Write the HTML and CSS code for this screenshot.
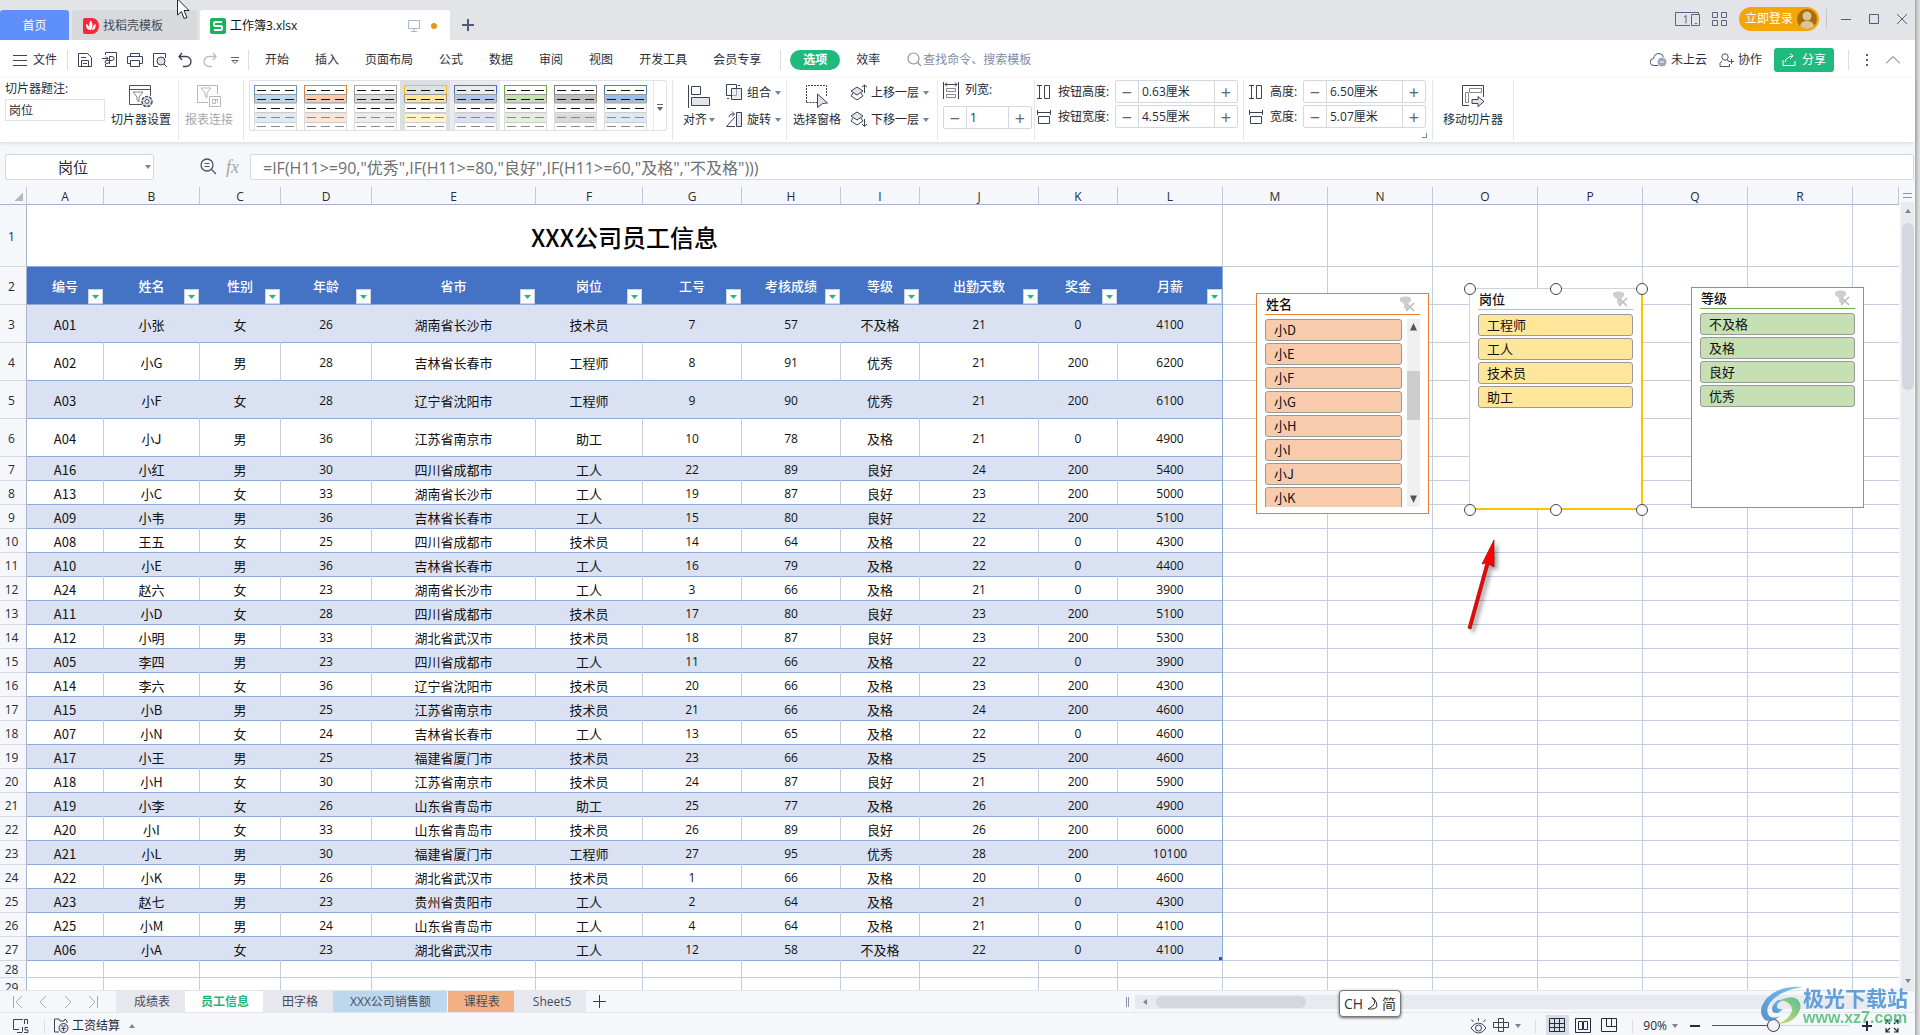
FILE: index.html
```html
<!DOCTYPE html>
<html lang="zh-CN">
<head>
<meta charset="utf-8">
<title>工作簿3.xlsx</title>
<link rel="stylesheet" href="styles.css">
</head>
<body>
<svg class="defs" aria-hidden="true">
  <symbol id="preset" viewBox="0 0 43 45">
    <rect x="0.5" y="0.5" width="42" height="9" fill="var(--head)" stroke="var(--accent)"/>
    <rect x="0.5" y="9.5" width="42" height="8" fill="var(--fill)" stroke="#999"/>
    <path d="M0 18.5h43M0 27.5h43M0 37.5h43" stroke="#ccc" stroke-width="2"/>
    <path d="M0.5 18v27M42.5 18v27" stroke="#ddd"/>
    <rect x="1" y="19" width="41" height="8" fill="#fff"/>
    <rect x="1" y="29" width="41" height="8" fill="var(--soft)"/>
    <rect x="1" y="38" width="41" height="7" fill="#fff"/>
    <path d="M3 5.5h9m5 0h9m5 0h9M3 14.5h9m5 0h9m5 0h9M3 23.5h9m5 0h9m5 0h9" stroke="#111"/>
    <path d="M3 32.5h9m5 0h9m5 0h9M3 41.5h9m5 0h9m5 0h9" stroke="#888"/>
  </symbol>
  <symbol id="caret" viewBox="0 0 6 4"><path d="M0 0h6L3 4z" fill="#7a8398"/></symbol>
  <symbol id="nofilter" viewBox="0 0 16 16">
    <path d="M1 2c3-2 8-2 11 0v3L9 8v7l-4-3V8L1 5z" fill="#cfcfcf"/><path d="M8 8l7 7M15 7l-8 8" stroke="#bbb" stroke-width="1.5"/>
  </symbol>
  <symbol id="filter" viewBox="0 0 15 15"><path d="M4 6h7l-3.500 4z" fill="#1fb980"/></symbol>
</svg>

<div class="app">
  <header class="titlebar">
    <nav class="doctabs">
      <button class="doctab home">首页</button>
      <button class="doctab store">
        <svg width="16" height="16" viewBox="0 0 16 16"><path d="M2 0h7a7 8 0 0 1 0 16H2a2 2 0 0 1-2-2V2a2 2 0 0 1 2-2z" fill="#f5273d"/><path d="M7.500 2.500c3 3 2 6 .5 10-2-2-2.500-6-.5-10zM3 6c2 .5 3 2 4 6-3 0-4-3-4-6zM12.500 6c-2 1-3 2.500-3.500 6 3 0 4-3 3.500-6z" fill="#fff"/></svg>
        找稻壳模板</button>
      <button class="doctab book">
        <svg width="16" height="16" viewBox="0 0 16 16"><rect width="16" height="16" rx="2" fill="#18b45c"/><path d="M12 4H5.500Q4 4 4 5.500V6.500Q4 8 5.500 8h5q1.500 0 1.500 1.500v1Q12 12 10.500 12H4" fill="none" stroke="#fff" stroke-width="2"/></svg>
        <span class="grow">工作簿3.xlsx</span>
        <svg width="12" height="12" viewBox="0 0 12 12" fill="none" stroke="#a9b3cc"><path d="M.5.5h11v8H.5zM6 8.500v3M3 11.500h6"/></svg>
        <i class="unsaved"></i></button>
      <button class="icon add"><svg width="12" height="12" viewBox="0 0 12 12"><path d="M6 0v12M0 6h12" stroke="#4f5c78" stroke-width="2"/></svg></button>
    </nav>
    <div class="winbar">
      <button class="icon"><svg width="25" height="15" viewBox="0 0 25 15" fill="none" stroke="#5a6580"><path d="M15 13.500H.5V.5h23v2M16.500 2.500h8v11h-8zM20 11.500h2M9 5l2-1.500v8"/></svg></button>
      <button class="icon"><svg width="15" height="15" viewBox="0 0 15 15" fill="none" stroke="#5a6580"><path d="M.5.500h5v5h-5zM9.500.500h5v5h-5zM.5 8.500h5v5h-5zM9.500 8.500h5v5h-5z"/></svg></button>
      <button class="login">立即登录
        <svg width="20" height="20" viewBox="0 0 20 20"><circle cx="10" cy="10" r="10" fill="#a66d06"/><circle cx="10" cy="7" r="4.500" fill="#dcc39a"/><path d="M3 17q1-5 7-5t7 5q-3 3-7 3t-7-3z" fill="#dcc39a"/></svg></button>
      <i class="sep"></i>
      <button class="icon"><svg width="10" height="10" viewBox="0 0 10 10"><path d="M0 5.500h10" stroke="#4f5c78"/></svg></button>
      <button class="icon"><svg width="10" height="10" viewBox="0 0 10 10"><path d="M.5.500h9v9h-9z" fill="none" stroke="#4f5c78"/></svg></button>
      <button class="icon"><svg width="10" height="10" viewBox="0 0 10 10"><path d="M0 0l10 10M10 0L0 10" stroke="#4f5c78"/></svg></button>
    </div>
  </header>

  <div class="menubar">
    <button class="file"><svg width="14" height="12" viewBox="0 0 14 12"><path d="M0 1.500h14M0 6.500h14M0 11.500h14" stroke="#444"/></svg>文件</button>
    <i class="sep"></i>
    <div class="quick">
      <button class="icon"><svg width="16" height="16" viewBox="0 0 16 16" fill="none" stroke="#3a4256"><path d="M1.500 1.500h9l4 4v9h-13zM4.500 14V8.500h7V14M4 5.500h5M6 11.500h4"/></svg></button>
      <button class="icon"><svg width="16" height="16" viewBox="0 0 16 16" fill="none" stroke="#3a4256"><path d="M3.500 3V.5h11v14h-11V12M0 6.500h6M4 4.500l2 2-2 2M7.500 12V4.500H10q2 0 2 2t-2 2H5q-2 0-2 1.500t2 1.500 2.500-2"/></svg></button>
      <button class="icon"><svg width="16" height="16" viewBox="0 0 16 16" fill="none" stroke="#3a4256"><path d="M3.500 4V1.500h9V4M3 11.500H.5v-7h15v7H13M3.500 8.500h9v6h-9z"/></svg></button>
      <button class="icon"><svg width="16" height="16" viewBox="0 0 16 16" fill="none" stroke="#3a4256"><path d="M6 14.500H1.500v-13h12V6"/><circle cx="9" cy="9" r="4" fill="#dfe2e8"/><path d="M12 12l3 3"/></svg></button>
      <button class="icon"><svg width="16" height="16" viewBox="0 0 16 16" fill="none" stroke="#3a4256" stroke-width="1.300"><path d="M5 1L2 4.500 5 8M2 4.500h7a5 5 0 0 1 0 10H6"/></svg></button>
      <button class="icon"><svg width="16" height="16" viewBox="0 0 16 16" fill="none" stroke="#b8bcc6" stroke-width="1.300"><path d="M11 1l3 3.500L11 8M14 4.500H7a5 5 0 0 0 0 10h3"/></svg></button>
      <button class="icon"><svg width="16" height="16" viewBox="0 0 16 16" fill="none" stroke="#5a6378"><path d="M4 5.500h8M5 8.500h6L8 11.500z"/></svg></button>
    </div>
    <i class="sep"></i>
    <nav class="menus">
      <button>开始</button><button>插入</button><button>页面布局</button><button>公式</button><button>数据</button><button>审阅</button><button>视图</button><button>开发工具</button><button>会员专享</button>
    </nav>
    <i class="sep"></i>
    <button class="pill">选项</button>
    <button class="effic">效率</button>
    <label class="search"><svg width="15" height="15" viewBox="0 0 15 15" fill="none" stroke="#8b94ad" stroke-width="1.200"><circle cx="6.500" cy="6.500" r="5.500"/><path d="M10.500 10.500L14 14"/></svg><input type="text" placeholder="查找命令、搜索模板" aria-label="查找命令"></label>
    <div class="account">
      <button class="cloud"><svg width="17" height="15" viewBox="0 0 17 15"><path d="M8 13.500H4a3.500 3.500 0 0 1-.5-7Q4.500 1.500 9 1.500q3.500 0 4.500 3.500" fill="none" stroke="#4a5369"/><circle cx="12" cy="10" r="4.500" fill="#a0a8bc"/><path d="M10 10h4" stroke="#fff"/></svg>未上云</button>
      <button class="team"><svg width="15" height="14" viewBox="0 0 15 14" fill="none" stroke="#4a5369"><circle cx="6" cy="4" r="3.200"/><path d="M8 7q2 1 2 1M3 8q-3 2-2 5.500h9.500V11M9.500 8.500H15M12.500 6v5"/></svg>协作</button>
      <button class="share"><svg width="14" height="13" viewBox="0 0 14 13" fill="none" stroke="#fff"><path d="M1 7v5.500h12V8M3 9q1-5 8-6M8 .5L11 3 8 6"/></svg>分享</button>
      <i class="sep"></i>
      <button class="icon"><svg width="4" height="14" viewBox="0 0 4 14" fill="#5a6378"><path d="M1 1h2v2H1zM1 6h2v2H1zM1 11h2v2H1z"/></svg></button>
      <button class="icon"><svg width="14" height="8" viewBox="0 0 14 8"><path d="M0 7.500L7 .5l7 7" fill="none" stroke="#5a6378"/></svg></button>
    </div>
  </div>

  <div class="ribbon">
    <section class="group caption">
      <div class="field"><label for="cap">切片器题注:</label><input id="cap" type="text" value="岗位"></div>
      <button class="big"><svg width="25" height="23" viewBox="0 0 25 23" fill="none" stroke="#4a5064"><path d="M13 19.500H.5V.5h21V11M.5 4.500h21"/><path d="M4 7h10l-4 5v5l-2-2v-3z" stroke="#888"/><circle cx="18" cy="16.500" r="5" fill="#dfe1e8" stroke-width="1.500" stroke-dasharray="3.200 1"/><circle cx="18" cy="16.500" r="2" fill="#fff"/></svg>切片器设置</button>
    </section>
    <section class="group link">
      <button class="big off"><svg width="25" height="23" viewBox="0 0 25 23" fill="none" stroke="#b5b7be"><path d="M11 17.500H.5V.5h20V9M4 3h10l-4 5v5l-2-2V8z"/><path d="M12.500 11.500h11v10h-11zM15.500 14.500h5v3M15.500 14.500v4h3v-4" fill="#fff"/></svg>报表连接</button>
    </section>
    <section class="group presets">
      <div class="gallery">
        <button class="blue"><svg><use href="#preset"/></svg></button>
        <button class="orange"><svg><use href="#preset"/></svg></button>
        <button class="gray"><svg><use href="#preset"/></svg></button>
        <button class="gold current"><svg><use href="#preset"/></svg></button>
        <button class="indigo hover"><svg><use href="#preset"/></svg></button>
        <button class="green"><svg><use href="#preset"/></svg></button>
        <button class="dark"><svg><use href="#preset"/></svg></button>
        <button class="royal"><svg><use href="#preset"/></svg></button>
        <button class="more"><svg width="6" height="8" viewBox="0 0 6 8"><path d="M0 .5h6" stroke="#5a6378"/><path d="M0 3h6L3 7z" fill="#5a6378"/></svg></button>
      </div>
    </section>
    <section class="group arrange">
      <button class="big"><svg width="23" height="23" viewBox="0 0 23 23" fill="none" stroke="#3a4256"><path d="M.5 0v23M3.500 1.500h9v8h-9z"/><path d="M3.500 12.500h18v8h-18z" fill="#e3e5ea"/></svg><span>对齐 <svg class="caret"><use href="#caret"/></svg></span></button>
      <div class="stack">
        <button><svg width="17" height="17" viewBox="0 0 17 17" fill="none" stroke="#3a4256"><path d="M.5.500h10v11H.5z"/><path d="M5.500 4.500h10v11h-10z" fill="#e3e5ea" fill-opacity=".6"/><path d="M12 1.500h2M1 14.500h2"/></svg>组合 <svg class="caret"><use href="#caret"/></svg></button>
        <button><svg width="17" height="17" viewBox="0 0 17 17" fill="none" stroke="#3a4256"><path d="M9 15.500H.5L9 6M3 6q0-3 5-3M6 .5L8.500 3 6 5.500"/><path d="M10.500 1.500h5v14h-5z" fill="#e3e5ea"/></svg>旋转 <svg class="caret"><use href="#caret"/></svg></button>
      </div>
    </section>
    <section class="group order">
      <button class="big"><svg width="24" height="23" viewBox="0 0 24 23" fill="none" stroke="#3a4256"><path d="M1.500 17V.5h20V11M1.500 17.500H12" stroke-dasharray="2 1"/><path d="M12.500 9l10 9-5 .5-5 4z" fill="#e3e5ea"/></svg>选择窗格</button>
      <div class="stack">
        <button><svg width="17" height="17" viewBox="0 0 17 17" fill="none" stroke="#3a4256"><path d="M3 9l-2 3 6 4 6-4-2-3"/><path d="M1 7l6-4 6 4-6 4z" fill="#e3e5ea"/><path d="M14.500 9V1M12 3l2.500-2L17 3"/></svg>上移一层 <svg class="caret"><use href="#caret"/></svg></button>
        <button><svg width="17" height="17" viewBox="0 0 17 17" fill="none" stroke="#3a4256"><path d="M3 7l-2 3 6 4 6-4-2-3"/><path d="M1 5l6-4 6 4-6 4z" fill="#e3e5ea"/><path d="M14.500 8v7M12 13l2.500 2.500L17 13"/></svg>下移一层 <svg class="caret"><use href="#caret"/></svg></button>
      </div>
    </section>
    <section class="group cols">
      <label for="cw"><svg width="16" height="17" viewBox="0 0 16 17" fill="none" stroke="#3a4256"><path d="M.5 0v17M15.500 0v17M2 2.500h12M4 .5l-2 2 2 2M12 .5l2 2-2 2"/><path d="M3.500 6.500h9v3h-9zM3.500 12.500h9v3h-9z" stroke="#888"/></svg>列宽:</label>
      <div class="spin"><button>−</button><input id="cw" value="1"><button>+</button></div>
    </section>
    <section class="group size">
      <label for="bh"><svg width="14" height="14" viewBox="0 0 14 14" fill="none" stroke="#3a4256"><path d="M0 .5h5M0 13.500h5M2.500.5v13M7.500.500h5v13h-5z"/></svg>按钮高度:</label>
      <div class="spin"><button>−</button><input id="bh" value="0.63厘米"><button>+</button></div>
      <label for="bw"><svg width="14" height="14" viewBox="0 0 14 14" fill="none" stroke="#3a4256"><path d="M.5 0v5M13.500 0v5M.5 2.500h13M1.500 6.500h11v7h-11z"/></svg>按钮宽度:</label>
      <div class="spin"><button>−</button><input id="bw" value="4.55厘米"><button>+</button></div>
    </section>
    <section class="group size">
      <label for="sh"><svg width="14" height="14" viewBox="0 0 14 14" fill="none" stroke="#3a4256"><path d="M0 .5h5M0 13.500h5M2.500.5v13M7.500.500h5v13h-5z"/></svg>高度:</label>
      <div class="spin"><button>−</button><input id="sh" value="6.50厘米"><button>+</button></div>
      <label for="sw"><svg width="14" height="14" viewBox="0 0 14 14" fill="none" stroke="#3a4256"><path d="M.5 0v5M13.500 0v5M.5 2.500h13M1.500 6.500h11v7h-11z"/></svg>宽度:</label>
      <div class="spin"><button>−</button><input id="sw" value="5.07厘米"><button>+</button></div>
      <i class="launcher"></i>
    </section>
    <section class="group move">
      <button class="big"><svg width="23" height="23" viewBox="0 0 23 23" fill="none" stroke="#3a4256"><path d="M7 20.500H.5V.5h21V12"/><path d="M7.500 3.500h12v4h-12zM3.500 7.500h3v10h-3z" stroke="#888"/><path d="M10 14.500h6v-3l6 5-6 5v-3h-6z" fill="#e3e5ea"/></svg>移动切片器</button>
    </section>
  </div>

  <div class="formula">
    <div class="namebox"><input type="text" value="岗位" aria-label="名称框"><svg class="caret"><use href="#caret"/></svg></div>
    <svg width="17" height="17" viewBox="0 0 17 17" fill="none" stroke="#4a5369" stroke-width="1.300"><circle cx="7" cy="7" r="6"/><path d="M4.500 5.500h5M4.500 8.500h5" stroke-width="1"/><path d="M11.500 11.500L16 16"/></svg>
    <span class="fx">fx</span>
    <input class="fbox" type="text" aria-label="编辑栏" value='=IF(H11&gt;=90,"优秀",IF(H11&gt;=80,"良好",IF(H11&gt;=60,"及格","不及格")))'>
  </div>

  <main class="work">
    <div class="sheet">
      <table>
        <colgroup><col class="rh"><col class="wa"><col class="wb"><col class="wc"><col class="wd"><col class="we"><col class="wf"><col class="wg"><col class="wg"><col class="wi"><col class="wj"><col class="wi"><col class="wl"><col class="wl"><col class="wl"><col class="wl"><col class="wl"><col class="wl"><col class="wl"><col></colgroup>
        <thead><tr><th class="corner"></th><th>A</th><th>B</th><th>C</th><th>D</th><th>E</th><th>F</th><th>G</th><th>H</th><th>I</th><th>J</th><th>K</th><th>L</th><th>M</th><th>N</th><th>O</th><th>P</th><th>Q</th><th>R</th><th></th></tr></thead>
        <tbody>
          <tr class="title"><th>1</th><td colspan="12">XXX公司员工信息</td><td class="free" colspan="7"></td></tr>
          <tr class="heads tall"><th>2</th><td>编号<button><svg><use href="#filter"/></svg></button></td><td>姓名<button><svg><use href="#filter"/></svg></button></td><td>性别<button><svg><use href="#filter"/></svg></button></td><td>年龄<button><svg><use href="#filter"/></svg></button></td><td>省市<button><svg><use href="#filter"/></svg></button></td><td>岗位<button><svg><use href="#filter"/></svg></button></td><td>工号<button><svg><use href="#filter"/></svg></button></td><td>考核成绩<button><svg><use href="#filter"/></svg></button></td><td>等级<button><svg><use href="#filter"/></svg></button></td><td>出勤天数<button><svg><use href="#filter"/></svg></button></td><td>奖金<button><svg><use href="#filter"/></svg></button></td><td>月薪<button><svg><use href="#filter"/></svg></button></td><td class="free" colspan="7"></td></tr>
          <tr class="band tall"><th>3</th><td>A01</td><td>小张</td><td>女</td><td>26</td><td>湖南省长沙市</td><td>技术员</td><td>7</td><td>57</td><td>不及格</td><td>21</td><td>0</td><td>4100</td><td class="free" colspan="7"></td></tr>
          <tr class="tall"><th>4</th><td>A02</td><td>小G</td><td>男</td><td>28</td><td>吉林省长春市</td><td>工程师</td><td>8</td><td>91</td><td>优秀</td><td>21</td><td>200</td><td>6200</td><td class="free" colspan="7"></td></tr>
          <tr class="band tall"><th>5</th><td>A03</td><td>小F</td><td>女</td><td>28</td><td>辽宁省沈阳市</td><td>工程师</td><td>9</td><td>90</td><td>优秀</td><td>21</td><td>200</td><td>6100</td><td class="free" colspan="7"></td></tr>
          <tr class="tall"><th>6</th><td>A04</td><td>小J</td><td>男</td><td>36</td><td>江苏省南京市</td><td>助工</td><td>10</td><td>78</td><td>及格</td><td>21</td><td>0</td><td>4900</td><td class="free" colspan="7"></td></tr>
          <tr class="band"><th>7</th><td>A16</td><td>小红</td><td>男</td><td>30</td><td>四川省成都市</td><td>工人</td><td>22</td><td>89</td><td>良好</td><td>24</td><td>200</td><td>5400</td><td class="free" colspan="7"></td></tr>
          <tr><th>8</th><td>A13</td><td>小C</td><td>女</td><td>33</td><td>湖南省长沙市</td><td>工人</td><td>19</td><td>87</td><td>良好</td><td>23</td><td>200</td><td>5000</td><td class="free" colspan="7"></td></tr>
          <tr class="band"><th>9</th><td>A09</td><td>小韦</td><td>男</td><td>36</td><td>吉林省长春市</td><td>工人</td><td>15</td><td>80</td><td>良好</td><td>22</td><td>200</td><td>5100</td><td class="free" colspan="7"></td></tr>
          <tr><th>10</th><td>A08</td><td>王五</td><td>女</td><td>25</td><td>四川省成都市</td><td>技术员</td><td>14</td><td>64</td><td>及格</td><td>22</td><td>0</td><td>4300</td><td class="free" colspan="7"></td></tr>
          <tr class="band"><th>11</th><td>A10</td><td>小E</td><td>男</td><td>36</td><td>吉林省长春市</td><td>工人</td><td>16</td><td>79</td><td>及格</td><td>22</td><td>0</td><td>4400</td><td class="free" colspan="7"></td></tr>
          <tr><th>12</th><td>A24</td><td>赵六</td><td>女</td><td>23</td><td>湖南省长沙市</td><td>工人</td><td>3</td><td>66</td><td>及格</td><td>21</td><td>0</td><td>3900</td><td class="free" colspan="7"></td></tr>
          <tr class="band"><th>13</th><td>A11</td><td>小D</td><td>女</td><td>28</td><td>四川省成都市</td><td>技术员</td><td>17</td><td>80</td><td>良好</td><td>23</td><td>200</td><td>5100</td><td class="free" colspan="7"></td></tr>
          <tr><th>14</th><td>A12</td><td>小明</td><td>男</td><td>33</td><td>湖北省武汉市</td><td>技术员</td><td>18</td><td>87</td><td>良好</td><td>23</td><td>200</td><td>5300</td><td class="free" colspan="7"></td></tr>
          <tr class="band"><th>15</th><td>A05</td><td>李四</td><td>男</td><td>23</td><td>四川省成都市</td><td>工人</td><td>11</td><td>66</td><td>及格</td><td>22</td><td>0</td><td>3900</td><td class="free" colspan="7"></td></tr>
          <tr><th>16</th><td>A14</td><td>李六</td><td>女</td><td>36</td><td>辽宁省沈阳市</td><td>技术员</td><td>20</td><td>66</td><td>及格</td><td>23</td><td>200</td><td>4300</td><td class="free" colspan="7"></td></tr>
          <tr class="band"><th>17</th><td>A15</td><td>小B</td><td>男</td><td>25</td><td>江苏省南京市</td><td>技术员</td><td>21</td><td>66</td><td>及格</td><td>24</td><td>200</td><td>4600</td><td class="free" colspan="7"></td></tr>
          <tr><th>18</th><td>A07</td><td>小N</td><td>女</td><td>24</td><td>吉林省长春市</td><td>工人</td><td>13</td><td>65</td><td>及格</td><td>22</td><td>0</td><td>4600</td><td class="free" colspan="7"></td></tr>
          <tr class="band"><th>19</th><td>A17</td><td>小王</td><td>男</td><td>25</td><td>福建省厦门市</td><td>技术员</td><td>23</td><td>66</td><td>及格</td><td>25</td><td>200</td><td>4600</td><td class="free" colspan="7"></td></tr>
          <tr><th>20</th><td>A18</td><td>小H</td><td>女</td><td>30</td><td>江苏省南京市</td><td>技术员</td><td>24</td><td>87</td><td>良好</td><td>21</td><td>200</td><td>5900</td><td class="free" colspan="7"></td></tr>
          <tr class="band"><th>21</th><td>A19</td><td>小李</td><td>女</td><td>26</td><td>山东省青岛市</td><td>助工</td><td>25</td><td>77</td><td>及格</td><td>26</td><td>200</td><td>4900</td><td class="free" colspan="7"></td></tr>
          <tr><th>22</th><td>A20</td><td>小I</td><td>女</td><td>33</td><td>山东省青岛市</td><td>技术员</td><td>26</td><td>89</td><td>良好</td><td>26</td><td>200</td><td>6000</td><td class="free" colspan="7"></td></tr>
          <tr class="band"><th>23</th><td>A21</td><td>小L</td><td>男</td><td>30</td><td>福建省厦门市</td><td>工程师</td><td>27</td><td>95</td><td>优秀</td><td>28</td><td>200</td><td>10100</td><td class="free" colspan="7"></td></tr>
          <tr><th>24</th><td>A22</td><td>小K</td><td>男</td><td>26</td><td>湖北省武汉市</td><td>技术员</td><td>1</td><td>66</td><td>及格</td><td>20</td><td>0</td><td>4600</td><td class="free" colspan="7"></td></tr>
          <tr class="band"><th>25</th><td>A23</td><td>赵七</td><td>男</td><td>23</td><td>贵州省贵阳市</td><td>工人</td><td>2</td><td>64</td><td>及格</td><td>21</td><td>0</td><td>4300</td><td class="free" colspan="7"></td></tr>
          <tr><th>26</th><td>A25</td><td>小M</td><td>男</td><td>24</td><td>山东省青岛市</td><td>工人</td><td>4</td><td>64</td><td>及格</td><td>21</td><td>0</td><td>4100</td><td class="free" colspan="7"></td></tr>
          <tr class="band"><th>27</th><td>A06</td><td>小A</td><td>女</td><td>23</td><td>湖北省武汉市</td><td>工人</td><td>12</td><td>58</td><td>不及格</td><td>22</td><td>0</td><td class="last">4100</td><td class="free" colspan="7"></td></tr>
          <tr class="blank"><th>28</th><td></td><td></td><td></td><td></td><td></td><td></td><td></td><td></td><td></td><td></td><td></td><td></td><td class="free" colspan="7"></td></tr>
          <tr class="blank"><th>29</th><td></td><td></td><td></td><td></td><td></td><td></td><td></td><td></td><td></td><td></td><td></td><td></td><td class="free" colspan="7"></td></tr>
        </tbody>
      </table>

      <aside class="slicer names">
        <h2>姓名<svg><use href="#nofilter"/></svg></h2>
        <div class="scroller">
          <div class="items"><button>小D</button><button>小E</button><button>小F</button><button>小G</button><button>小H</button><button>小I</button><button>小J</button><button>小K</button></div>
          <div class="track"><svg width="9" height="8" viewBox="0 0 9 8"><path d="M1 7.500h7L4.500 0z" fill="#555"/></svg><i></i><svg width="9" height="8" viewBox="0 0 9 8"><path d="M1 .5h7L4.500 8z" fill="#555"/></svg></div>
        </div>
      </aside>
      <aside class="slicer posts">
        <h2>岗位<svg><use href="#nofilter"/></svg></h2>
        <div class="items"><button>工程师</button><button>工人</button><button>技术员</button><button>助工</button></div>
        <i class="handle tl"></i><i class="handle tc"></i><i class="handle tr"></i><i class="handle bl"></i><i class="handle bc"></i><i class="handle br"></i>
      </aside>
      <aside class="slicer grades">
        <h2>等级<svg><use href="#nofilter"/></svg></h2>
        <div class="items"><button>不及格</button><button>及格</button><button>良好</button><button>优秀</button></div>
      </aside>
      <svg class="pointer" width="40" height="100" viewBox="0 0 40 100"><path d="M30 1l0 27-5-3L7 90 4 89 22 24l-4 1z" fill="#f00" stroke="#8a1010" stroke-width=".7"/></svg>
    </div>
    <div class="vscroll"><i class="split"></i><div class="vtrack"><svg class="caret up"><use href="#caret"/></svg><i class="thumb"></i><svg class="caret"><use href="#caret"/></svg></div></div>
  </main>

  <div class="tabs">
    <div class="pager">
      <button class="icon"><svg width="10" height="12" viewBox="0 0 10 12" fill="none" stroke="#a7abb8"><path d="M.5 0v12M9 0L3 6l6 6"/></svg></button>
      <button class="icon"><svg width="10" height="12" viewBox="0 0 10 12" fill="none" stroke="#a7abb8"><path d="M8 0L2 6l6 6"/></svg></button>
      <button class="icon"><svg width="10" height="12" viewBox="0 0 10 12" fill="none" stroke="#a7abb8"><path d="M2 0l6 6-6 6"/></svg></button>
      <button class="icon"><svg width="10" height="12" viewBox="0 0 10 12" fill="none" stroke="#a7abb8"><path d="M1 0l6 6-6 6M9.500 0v12"/></svg></button>
    </div>
    <button class="tab">成绩表</button><button class="tab active">员工信息</button><button class="tab">田字格</button><button class="tab sales">XXX公司销售额</button><button class="tab course">课程表</button><button class="tab">Sheet5</button>
    <button class="icon newtab"><svg width="13" height="13" viewBox="0 0 13 13"><path d="M6.500 0v13M0 6.500h13" stroke="#333b50"/></svg></button>
    <div class="hscroll"><i class="grip"></i><div class="htrack"><svg width="4" height="6" viewBox="0 0 4 6"><path d="M4 0v6L0 3z" fill="#7a86a8"/></svg><i class="thumb"></i></div></div>
  </div>

  <footer class="status">
    <button class="icon"><svg width="17" height="16" viewBox="0 0 17 16" fill="none" stroke="#3a4256"><path d="M10 1.500H.5v10H6M4 14.500h4M11.500 6V1.500h3V6M9.500 9v4.500q0 1.500-2 1M15 9.500h-3v2.500h3v2.500h-4"/></svg></button>
    <i class="sep"></i>
    <button class="calc"><svg width="15" height="15" viewBox="0 0 15 15" fill="none" stroke="#3a4256"><path d="M5 14H.5V1H5l1 2h4l1-2 2 2v2"/><circle cx="9.500" cy="10" r="4.500" fill="#dfe2e8"/><path d="M7.500 7l2 2.500 2-2.500M9.500 9.500V13M7.500 10.500h4"/></svg>工资结算<svg class="caret up"><use href="#caret"/></svg></button>
    <div class="views">
      <button class="icon"><svg width="17" height="16" viewBox="0 0 17 16" fill="none" stroke="#3a4256"><path d="M1 10q3-5 7.500-5t7.500 5q-3 5-7.500 5T1 10zM8.500 3V0M3.500 4l-2-2.500M13.500 4l2-2.500"/><circle cx="8.500" cy="10" r="3"/></svg></button>
      <button class="icon focus"><svg width="17" height="15" viewBox="0 0 17 15" fill="none" stroke="#3a4256"><path d="M5.500.5h5v4h5v5h-5v4h-5v-4h-5v-5h5zM5.500 4.500h5v5h-5z"/></svg><svg class="caret"><use href="#caret"/></svg></button>
      <i class="sep"></i>
      <button class="icon on"><svg width="17" height="15" viewBox="0 0 17 15" fill="none" stroke="#232b40"><path d="M.5.500h15v13H.5zM.5 5.500h15M.5 9.500h15M5.500.5v13M10.500.5v13"/></svg></button>
      <button class="icon"><svg width="17" height="15" viewBox="0 0 17 15" fill="none" stroke="#232b40"><path d="M.5.500h15v14H.5zM3.500 3.500h4v8h-4zM8.500 3.500h4v8h-4z"/></svg></button>
      <button class="icon"><svg width="17" height="15" viewBox="0 0 17 15" fill="none" stroke="#232b40"><path d="M.5.500h15v13H.5zM5.500.5v8h10M10.500.5v8"/></svg></button>
      <i class="sep"></i>
      <button class="zoom">90%<svg class="caret"><use href="#caret"/></svg></button>
      <button class="icon"><svg width="10" height="10" viewBox="0 0 10 10"><path d="M0 5h10" stroke="#232b40" stroke-width="2"/></svg></button>
      <input class="slider" type="range" min="0" max="100" value="44" aria-label="缩放">
      <button class="icon"><svg width="10" height="10" viewBox="0 0 10 10"><path d="M0 5h10M5 0v10" stroke="#232b40" stroke-width="2"/></svg></button>
      <button class="icon full"><svg width="14" height="14" viewBox="0 0 14 14" fill="none" stroke="#232b40" stroke-width="1.200"><path d="M1 5V1h4M1 1l4 4M9 1h4v4M13 1L9 5M1 9v4h4M1 13l4-4M13 9v4H9M13 13L9 9"/></svg></button>
    </div>
  </footer>
</div>
<div class="edge"></div>

<div class="ime">CH <svg width="11" height="13" viewBox="0 0 11 13" fill="none" stroke="#333"><path d="M5 .5q7 6-4 11.500 11 1 8.500-6Q8.500 2 5 .5z"/></svg> 简</div>
<div class="mark">
  <svg width="43" height="40" viewBox="0 0 43 40"><defs><linearGradient id="sw1" x1="0" y1="1" x2="1" y2="0"><stop offset="0" stop-color="#3c7fc6"/><stop offset="1" stop-color="#63bff2"/></linearGradient><linearGradient id="sw2" x1="0" y1="1" x2="1" y2="0"><stop offset="0" stop-color="#c8d94a"/><stop offset="1" stop-color="#3fb78b"/></linearGradient></defs><path d="M43 1Q20-1 7 12-4 25 5 34q7 3 15-4-9 4-12-2 -3-9 8-17Q27 3 43 1z" fill="url(#sw1)"/><path d="M18 14q-8 6-5 12 5 3 10-3-6 1-6-3t8-6z" fill="url(#sw1)"/><path d="M20 14q11-5 17-1 6 6 2 13-6 12-22 12 12-4 15-13 1-9-12-11z" fill="url(#sw2)"/></svg>
  <div><strong>极光下载站</strong><span>www.xz7.com</span></div>
</div>
<svg class="cursor" width="13" height="20" viewBox="0 0 13 20"><path d="M.5-1v16l4-3.500 2.500 7 3-1-3-7h5z" fill="#fff" stroke="#222"/></svg>
</body>
</html>
```
FILE: styles.css
```css
* { box-sizing: border-box; }
body {
  margin: 0; height: 100vh; display: flex; overflow: hidden; position: relative;
  font: 12px/16px "Open Sans", "Noto Sans CJK SC", sans-serif; color: #262b38; background: #f5f7fa;
}
button, input { font: inherit; color: inherit; margin: 0; padding: 0; border: 0; background: none; min-width: 0; }
button { display: flex; align-items: center; justify-content: center; white-space: nowrap; }
input:focus { outline: 0; }
svg { display: block; flex: none; }
.defs { position: absolute; width: 0; height: 0; }
.caret { width: 6px; height: 4px; }
.caret.up { transform: scaleY(-1); }
.sep { width: 1px; height: 20px; background: #dcdee4; flex: none; }
.app { flex: 1; min-width: 0; display: flex; flex-direction: column; }
.edge { width: 5px; background: linear-gradient(90deg, #a9a9ab, #dedede 80%); }

/* title bar */
.titlebar { height: 40px; background: #e3e4e8; display: flex; justify-content: space-between; }
.doctabs { display: flex; align-items: flex-end; gap: 3px; }
.doctab { height: 30px; border-radius: 3px 3px 0 0; padding-top: 1px; }
.home { width: 69px; background: #5f8ffb; color: #fff; }
.store { width: 125px; background: #d8d9dd; color: #444a58; justify-content: flex-start; gap: 4px; padding-left: 11px; }
.book { width: 250px; background: #fff; color: #111; gap: 4px; padding: 1px 13px 0 10px; }
.grow { flex: 1; text-align: left; }
.unsaved { width: 6px; height: 6px; border-radius: 3px; background: #e8960c; margin-left: 7px; }
.add { height: 30px; width: 30px; }
.winbar { display: flex; align-items: center; gap: 12px; padding: 0 8px 2px 0; }
.login { height: 24px; border-radius: 12px; background: #f5a50a; color: #fff; gap: 4px; padding: 0 2px 0 6px; }
.winbar .sep { margin: 0 2px 0 -5px; background: #c6c8ce; }
.winbar .sep ~ .icon { margin-right: 6px; }
.winbar .icon:last-child { margin: 0; }

/* menu bar */
.menubar { height: 38px; background: #fff; display: flex; align-items: center; color: #2b3040; padding-top: 1px; }
.file { gap: 6px; padding: 0 10px 0 13px; }
.quick { display: flex; gap: 9px; padding: 0 5px 0 9px; }
.menus { display: flex; gap: 26px; padding: 0 19px 0 16px; }
.pill { height: 20px; width: 50px; border-radius: 10px; background: #1fba7d; color: #fff; font-weight: 600; margin-left: 9px; }
.effic { margin: 0 27px 0 16px; }
.search { display: flex; align-items: center; gap: 1px; }
.search input { width: 140px; }
.search input::placeholder { color: #838ca5; opacity: 1; }
.account { margin-left: auto; display: flex; align-items: center; gap: 12px; padding-right: 15px; }
.account button { gap: 4px; }
.account .sep { margin: 0 4px 0 2px; }
.account .icon { margin-right: 5px; }
.account .icon:last-child { margin: 0; }
.account .share { height: 24px; width: 60px; border-radius: 3px; background: #1fba7d; color: #fff; gap: 6px; }

/* ribbon */
.ribbon { height: 64px; background: #fff; display: flex; box-shadow: 0 1px 4px #0002; position: relative; padding: 2px 0; }
.group { border-right: 1px solid #e4e6ec; height: 60px; display: flex; flex: none; position: relative; }
.caption { width: 179px; padding-left: 5px; gap: 6px; }
.field { width: 100px; }
.field label { display: block; line-height: 18px; }
.field input { width: 100%; height: 22px; border: 1px solid #dfe1e8; padding: 0 3px; display: block; margin-top: 1px; }
.big { flex-direction: column; gap: 4px; height: 51px; justify-content: flex-start; padding-top: 5px; }
.big span { display: flex; align-items: center; gap: 2px; }
.off { color: #a6a8ae; }
.link { width: 65px; padding-left: 6px; }
.presets { width: 429px; padding-left: 5px; }
.gallery { width: 418px; height: 51px; border: 1px solid #dfe1e8; border-radius: 2px; display: flex; }
.gallery button { width: 50px; height: 49px; }
.gallery button svg { width: 43px; height: 45px; margin-top: 4px; }
.gallery .more { width: 13px; margin-left: auto; border-left: 1px solid #e4e6ec; }
.gallery .more svg { width: 6px; height: 8px; }
.blue { --accent: #5b9bd5; --fill: #bdd7ee; --soft: #ddebf7; --head: #fff; }
.orange { --accent: #ed7d31; --fill: #f8cbad; --soft: #fce4d6; --head: #fff; }
.gray { --accent: #a5a5a5; --fill: #dbdbdb; --soft: #ededed; --head: #fff; }
.gold { --accent: #ffc000; --fill: #ffe699; --soft: #fff2cc; --head: #dde2e4; }
.indigo { --accent: #4472c4; --fill: #b4c6e7; --soft: #d9e1f2; --head: #e8ebf0; }
.green { --accent: #70ad47; --fill: #c6e0b4; --soft: #e2efda; --head: #fff; }
.dark { --accent: #808080; --fill: #bfbfbf; --soft: #d9d9d9; --head: #fff; }
.royal { --accent: #4f81bd; --fill: #9dbce6; --soft: #dce8f8; --head: #fff; }
.current { background: #dadfe2; }
.hover { background: #e8ebf0; }
.arrange { width: 114px; padding-left: 10px; gap: 11px; }
.stack { display: flex; flex-direction: column; gap: 10px; padding-top: 4px; }
.stack button { gap: 4px; height: 17px; }
.order { width: 151px; padding-left: 6px; gap: 9px; }
.cols { width: 97px; padding-left: 5px; flex-direction: column; gap: 6px; }
.cols label { display: flex; gap: 6px; align-items: center; height: 20px; }
.spin { display: flex; border: 1px solid #d5d8e0; border-radius: 2px; height: 23px; width: 123px; }
.cols .spin { width: 89px; }
.spin button { width: 22px; flex: none; font-size: 18px; color: #666; }
.spin input { flex: 1; border: solid #d5d8e0; border-width: 0 1px; padding-left: 3px; }
.size { display: grid; grid-template-columns: 78px 123px; grid-auto-rows: 23px; row-gap: 2px; padding: 0 5px 0 2px; width: 209px; justify-content: start; }
.size + .size { grid-template-columns: 54px 123px; width: 189px; padding-left: 5px; }
.size label { display: flex; align-items: center; gap: 7px; white-space: nowrap; }
.launcher { position: absolute; right: 5px; bottom: 2px; width: 5px; height: 5px; border: solid #7a8398; border-width: 0 1px 1px 0; }
.move { width: 81px; padding-left: 10px; }

/* formula bar */
.formula { height: 45px; display: flex; align-items: center; padding: 4px 1px 0 5px; font-size: 15px; }
.namebox { width: 149px; height: 26px; border: 1px solid #d5d8de; border-radius: 2px; background: #fff; display: flex; align-items: center; padding-right: 2px; margin-right: 46px; }
.namebox input { flex: 1; text-align: center; padding-right: 5px; }
.fx { font: italic 18px/20px "Liberation Serif", serif; color: #a3a7b0; margin: 0 8px 0 9px; width: 16px; }
.fbox { flex: 1; height: 26px; border: 1px solid #d5d8de; border-radius: 2px; background: #fff; color: #6e7074; padding-left: 12px; font-size: 16px; }

/* sheet */
.work { flex: 1; min-height: 0; display: flex; }
.sheet { flex: 1; min-width: 0; overflow: hidden; position: relative; background: #fff; }
table { width: 100%; table-layout: fixed; border-collapse: separate; border-spacing: 0; line-height: 14px; }
.rh { width: 27px; } .wa { width: 77px; } .wb { width: 96px; } .wc { width: 81px; } .wd { width: 91px; }
.we { width: 164px; } .wf { width: 107px; } .wg { width: 99px; } .wi { width: 79px; } .wj { width: 119px; } .wl { width: 105px; }
th { padding: 2px 0 0; font-weight: 400; background: #f5f7fa; border: solid #a9b3cd; border-width: 0 1px 1px 0; }
thead th { height: 18px; padding-top: 3px; border-right-color: #c3c9da; }
tbody th { border-bottom-color: #d3d8e4; padding-right: 3px; }
.corner { background: linear-gradient(135deg, transparent 50%, #b5b8c0 50%) 15px 6px / 8px 8px no-repeat #f5f7fa; }
tr { height: 24px; }
.tall { height: 38px; }
.title { height: 62px; }
.blank, thead tr { height: 17px; }
.blank:nth-child(29) { height: 18px; }
td { padding: 2px 0 0; text-align: center; border: solid #c5ccde; border-width: 0 1px 1px 0; border-bottom-color: #8ea9db; font-size: 12px; position: relative; color: #111; }
td:nth-child(2), td:nth-child(3), td:nth-child(4), td:nth-child(6), td:nth-child(7), td:nth-child(10) { font-size: 13px; font-family: "Noto Sans CJK SC", sans-serif; }
.title td:nth-child(2) { font-size: 24px; font-weight: 500; color: #000; }
.heads td { background: #4472c4; color: #fff; font-size: 13px; font-weight: 500; font-family: "Noto Sans CJK SC", sans-serif; border-right-color: #4472c4; padding-top: 0; }
.heads td button { position: absolute; right: 0; bottom: 0; width: 15px; height: 15px; background: #fff; border: 1px solid #ccd3e0; }
.heads td svg { width: 15px; height: 15px; }
.band td { background-color: #d9e1f2; border-right-color: #d9e1f2; }
td:nth-child(13) { border-right-color: #8ea9db; }
.blank td { border-color: #c5ccde; }
td.free { border-right: 0; border-bottom-color: #c5ccde; background: repeating-linear-gradient(90deg, #fff 0 104px, #c5ccde 104px 105px); }
.last::after { content: ""; position: absolute; right: 0; bottom: 0; width: 3px; height: 3px; background: #2f55a4; }

/* slicers */
.slicer { position: absolute; width: 173px; height: 221px; background: #fff; border: 1px solid; padding: 0 8px; font: 13px/16px "Noto Sans CJK SC", sans-serif; color: #111; }
.slicer h2 { margin: 0 0 4px; height: 21px; border-bottom: 1px solid; display: flex; align-items: center; justify-content: space-between; font-size: 13px; line-height: 16px; font-weight: 500; padding: 0 5px 0 1px; }
.slicer h2 svg { width: 16px; height: 16px; }
.items { display: flex; flex-direction: column; gap: 2px; flex: 1; }
.items button { height: 22px; flex: none; border: 1px solid #999; border-radius: 3px; justify-content: flex-start; padding-left: 8px; }
.names { left: 1256px; top: 106px; border-color: #ed7d31; }
.names h2 { border-color: #ed7d31; }
.names .items button { background: #f8cbad; }
.posts { left: 1469px; top: 101px; height: 222px; width: 174px; border: solid #d0d3da; border-width: 1px 2px 2px 1px; border-right-color: #ffc000; border-bottom-color: #ffc000; }
.posts h2 { border-color: #ffc000; }
.posts .items button { background: #ffe699; }
.grades { left: 1691px; top: 100px; border-color: #70ad47; }
.grades h2 { border-color: #70ad47; }
.grades .items button { background: #c6e0b4; }
.scroller { display: flex; gap: 5px; height: 188px; overflow: hidden; }
.track { width: 13px; background: #f0f0f0; display: flex; flex-direction: column; align-items: center; padding: 4px 0; }
.track i { width: 13px; height: 49px; background: #cdcdcd; margin: 40px 0 auto; }
.handle { position: absolute; width: 12px; height: 12px; border-radius: 6px; border: 1px solid #444; background: #fff; }
.tl, .tc, .tr { top: -6px; } .bl, .bc, .br { bottom: -8px; }
.tl, .bl { left: -6px; } .tc, .bc { left: 80px; } .tr, .br { right: -7px; }
.pointer { position: absolute; left: 1464px; top: 352px; filter: drop-shadow(3px 3px 2px #0006); }

/* scroll bars */
.vscroll { width: 16px; display: flex; flex-direction: column; padding-right: 1px; }
.split { height: 5px; margin: 6px 2px 4px 4px; border: solid #8d95ab; border-width: 1px 0; }
.vtrack { flex: 1; background: #e9eaef; margin-left: 2px; display: flex; flex-direction: column; align-items: center; padding: 7px 0; }
.vtrack .thumb { width: 12px; height: 167px; border-radius: 6px; background: #d4d7df; margin: 10px 0 auto; }

/* sheet tabs */
.tabs { height: 23px; border: solid #e3e5ea; border-width: 1px 0; display: flex; align-items: stretch; color: #464c5e; }
.pager { width: 116px; display: flex; align-items: center; gap: 15px; padding-left: 13px; }
.tab { background: #e6e8ed; padding: 0 14px 0 18px; border-right: 1px solid #e6e8ed; }
.tab.active { background: #fff; color: #1fb57a; font-weight: 700; padding: 0 14px 0 16px; }
.tab.sales { background: #bdd7ee; padding: 0 16px 0 17px; border-right-color: #f5f7fa; }
.tab.course { background: #f4b084; padding: 0 14px 0 16px; }
.newtab { padding: 0 7px; }
.hscroll { flex: 1; max-width: 790px; margin-left: auto; display: flex; align-items: center; gap: 6px; }
.grip { width: 3px; height: 10px; border: solid #8d95ab; border-width: 0 1px; margin-left: 1px; }
.htrack { flex: 1; height: 14px; background: #e9eaef; display: flex; align-items: center; gap: 9px; padding-left: 8px; margin-right: 46px; }
.htrack .thumb { width: 150px; height: 12px; border-radius: 6px; background: #d4d7df; }

/* status bar */
.status { height: 22px; display: flex; align-items: center; padding: 3px 13px 0 13px; }
.status .sep { height: 14px; margin: 0 9px 0 14px; }
.status .views .sep { margin: 0 10px 0 11px; }
.calc { gap: 3px; }
.calc .caret { margin-left: 6px; }
.views { margin-left: auto; display: flex; align-items: center; height: 22px; }
.views .icon { padding: 0 3px; height: 22px; }
.views .focus { gap: 5px; }
.views .on { background: #d9dce4; }
.views .on ~ .icon { margin-left: 3px; }
.zoom { gap: 5px; margin-right: 6px; }
.slider { appearance: none; width: 138px; height: 14px; margin: 0 6px 0 9px; background: linear-gradient(90deg, #4a5369 44%, #d3d6de 44%) 0 6px / 100% 1px no-repeat; }
.slider::-webkit-slider-thumb { appearance: none; width: 13px; height: 13px; border-radius: 7px; border: 1px solid #333; background: #f2f2f2; }
.views .icon.full { margin-left: 7px; }

/* overlays */
.ime { position: absolute; left: 1339px; bottom: 18px; height: 27px; width: 62px; background: #fff; border: 1px solid #777; border-radius: 4px; box-shadow: 0 1px 3px #0009; display: flex; align-items: center; justify-content: center; gap: 4px; font-size: 14px; color: #333; }
.mark { position: absolute; right: 12px; bottom: 8px; display: flex; align-items: center; opacity: .85; pointer-events: none; }
.mark strong { display: block; font: 700 21px/24px "Noto Sans CJK SC", sans-serif; color: #4a92d4; }
.mark span { display: block; font: 700 16px/18px "Liberation Sans", sans-serif; color: #4fbf78; }
.cursor { position: absolute; left: 177px; top: 0; }
```
